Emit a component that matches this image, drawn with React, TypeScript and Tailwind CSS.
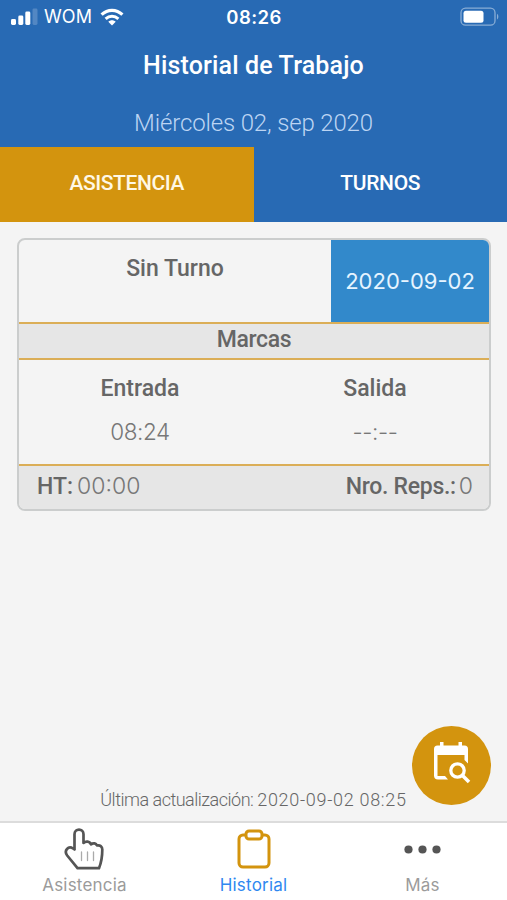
import type { ReactNode } from 'react'

type MarkProps = {
  label: string
  value: string
}

type TabItemProps = {
  label: string
  active?: boolean
  children: ReactNode
}

function StatusBar() {
  return (
    <div className="grid h-[34px] grid-cols-3 items-center pr-[8px] pl-[11px] font-['Inter',sans-serif] text-white">
      <div className="flex items-center">
        <svg width="27" height="18" viewBox="0 0 27 18" fill="currentColor" aria-hidden="true">
          <rect x="0" y="11" width="5" height="6" rx="1.4" />
          <rect x="7.3" y="7.5" width="5" height="9.5" rx="1.4" />
          <rect x="14.3" y="3.5" width="5" height="13.5" rx="1.4" />
          <rect x="21.5" y="0.5" width="5" height="16.5" rx="1.4" opacity="0.2" />
        </svg>
        <span className="ml-[6px] text-[18px] leading-none tracking-[0.1px]">WOM</span>
        <svg className="ml-[8px]" width="24" height="18" viewBox="0 0 24 18" fill="none" aria-hidden="true">
          <path d="M1.6 6.6C7.6.9 16.4.9 22.4 6.6" stroke="currentColor" strokeWidth="3.2" />
          <path d="M5.6 10.8c3.8-3.5 9-3.5 12.8 0" stroke="currentColor" strokeWidth="3" />
          <path d="M8.3 13.7c2.2-2 5.2-2 7.4 0L12 17.4z" fill="currentColor" />
        </svg>
      </div>
      <span className="pr-[2px] text-center text-[18.5px] leading-none font-semibold tracking-[0.4px]">08:26</span>
      <div className="flex items-center justify-end">
        <svg width="39" height="20" viewBox="0 0 39 20" fill="none" aria-hidden="true">
          <rect x="1" y="1.2" width="34" height="17" rx="4.5" stroke="currentColor" strokeWidth="1.3" opacity="0.45" />
          <rect x="3.5" y="3.7" width="20" height="12" rx="2.5" fill="currentColor" />
          <path d="M37 6.8c1.8 1 1.8 4.8 0 5.8z" fill="currentColor" opacity="0.45" />
        </svg>
      </div>
    </div>
  )
}

function Mark({ label, value }: MarkProps) {
  return (
    <div className="flex flex-col items-center pt-[12px]">
      <span className="text-[23px] leading-[34px] font-medium">{label}</span>
      <span className="mt-[9px] font-['Inter',sans-serif] text-[22.5px] leading-[34px] font-light tracking-[-0.4px] text-[#777]">
        {value}
      </span>
    </div>
  )
}

function TabItem({ label, active = false, children }: TabItemProps) {
  return (
    <button type="button" className="flex flex-col items-center pt-[4px]">
      <span className="flex h-[44px] items-center justify-center">{children}</span>
      <span
        className={`mt-[3px] font-['Inter',sans-serif] text-[17px] leading-[22px] tracking-[0.2px] ${
          active ? 'text-[#2f88f0]' : 'text-[#9b9b9b]'
        }`}
      >
        {label}
      </span>
    </button>
  )
}

function HandIcon() {
  return (
    <svg className="mr-[2px]" width="40" height="42" viewBox="0 0 40 42" fill="none" strokeLinecap="round" strokeLinejoin="round" aria-hidden="true">
      <path
        d="M10.5 21.5V6.2C10.5 0 19.5 0 19.5 6.2V15C22 12.8 25.5 13.3 27 16.3C29.5 14.5 32 15.3 33 17.5C36 16.8 38.3 18.5 38.3 21.5C38.3 29 37.5 34 35 40.2H13.5L3.2 27.5C-0.5 22.5 4.5 17.5 9 20.5L10.500 21.500"
        stroke="#555"
        strokeWidth="2.7"
      />
      <path d="M17.500 24v8.500M23.500 24v8.500M29.500 24v8.500" stroke="#aaa" strokeWidth="1.3" />
    </svg>
  )
}

function ClipboardIcon() {
  return (
    <svg width="34" height="40" viewBox="0 0 34 40" fill="none" stroke="#d3940e" strokeWidth="3" strokeLinejoin="round" aria-hidden="true">
      <path d="M9 6H6a4 4 0 0 0-4 4v24a4 4 0 0 0 4 4h22a4 4 0 0 0 4-4V10a4 4 0 0 0-4-4h-3" />
      <rect x="9" y="2" width="16" height="8" rx="3" />
    </svg>
  )
}

function CalendarSearchIcon() {
  return (
    <svg className="mb-[5px] ml-[2px]" width="38" height="42" viewBox="0 0 38 42" fill="none" aria-hidden="true">
      <path
        d="M6 0h3.5v3.5h15V0H28v3.500h2.500a3.500 3.500 0 0 1 3.500 3.500V21.500L30.500 18V13H3.500v21h7.500l3 3.500H4a4 4 0 0 1-4-4V7a3.500 3.500 0 0 1 3.500-3.500H6z"
        fill="white"
      />
      <circle cx="23.5" cy="28.5" r="6.7" stroke="white" strokeWidth="3.3" />
      <path d="m28.5 33.5 6.5 6.5" stroke="white" strokeWidth="3.6" />
    </svg>
  )
}

export default function App() {
  return (
    <div className="flex h-[900px] w-[507px] flex-col overflow-hidden bg-[#f4f4f4] font-['Roboto',sans-serif] text-[#666]">
      <header className="h-[222px] bg-[#286ab4] text-white">
        <StatusBar />
        <h1 className="mt-[13px] text-center text-[25px] leading-[38px] font-medium tracking-[0.15px]">
          Historial de Trabajo
        </h1>
        <p className="mt-[20px] text-center text-[24px] leading-[36px] font-light tracking-[-0.15px] text-[#bdd5f3]">
          Miércoles 02, sep 2020
        </p>
        <div className="mt-[6px] grid h-[75px] grid-cols-2">
          <button type="button" className="bg-[#d3940e] pb-[2px] text-[21px] font-medium tracking-[-0.4px] text-[#fff8e6]">
            ASISTENCIA
          </button>
          <button type="button" className="pb-[2px] text-[21px] font-medium tracking-[-0.3px]">
            TURNOS
          </button>
        </div>
      </header>

      <main className="relative flex flex-1 flex-col">
        <section className="mt-4 mr-[16px] ml-[17px] h-[273px] overflow-hidden rounded-[8px] border-2 border-[#cbcdcd]">
          <div className="flex h-[82px]">
            <div className="flex-1 pt-[12px] text-center text-[23px] leading-[34px] font-medium">Sin Turno</div>
            <div className="flex w-[158px] items-center justify-center bg-[#3289cb] font-['Inter',sans-serif] text-[22px] text-[#e6f4ff]">
              2020-09-02
            </div>
          </div>
          <div className="h-[38px] border-y-2 border-[#dbae57] bg-[#e6e6e6] text-center text-[23px] leading-[32px] font-medium tracking-[-0.4px]">
            Marcas
          </div>
          <div className="grid h-[104px] grid-cols-[242px_1fr]">
            <Mark label="Entrada" value="08:24" />
            <Mark label="Salida" value="--:--" />
          </div>
          <div className="flex h-[45px] justify-between border-t-2 border-[#dbae57] bg-[#e6e6e6] pr-[16px] pl-[18px] text-[23px] leading-[41px]">
            <p>
              <span className="font-medium">HT:</span>
              <span className="ml-[4px] font-['Inter',sans-serif] font-light text-[#777]">00:00</span>
            </p>
            <p>
              <span className="font-medium tracking-[-0.3px]">Nro. Reps.:</span>
              <span className="ml-[3px] font-['Inter',sans-serif] font-light text-[#777]">0</span>
            </p>
          </div>
        </section>

        <p className="mt-auto mb-[9px] text-center text-[18px] leading-[24px] font-light">
          <span className="tracking-[-0.5px]">Última actualización: </span>
          <span className="tracking-[0.7px]">2020-09-02 08:25</span>
        </p>
        <button
          type="button"
          aria-label="Buscar fecha"
          className="absolute right-[16px] bottom-[16px] flex size-[79px] items-center justify-center rounded-full bg-[#d3940e]"
        >
          <CalendarSearchIcon />
        </button>
      </main>

      <nav className="grid h-[79px] grid-cols-3 border-t-2 border-[#dcdcdc] bg-white">
        <TabItem label="Asistencia">
          <HandIcon />
        </TabItem>
        <TabItem label="Historial" active>
          <ClipboardIcon />
        </TabItem>
        <TabItem label="Más">
          <svg width="37" height="9" viewBox="0 0 37 9" fill="#555" aria-hidden="true">
            <circle cx="4.5" cy="4.5" r="4.1" />
            <circle cx="18.5" cy="4.5" r="4.1" />
            <circle cx="32.5" cy="4.5" r="4.1" />
          </svg>
        </TabItem>
      </nav>
    </div>
  )
}
